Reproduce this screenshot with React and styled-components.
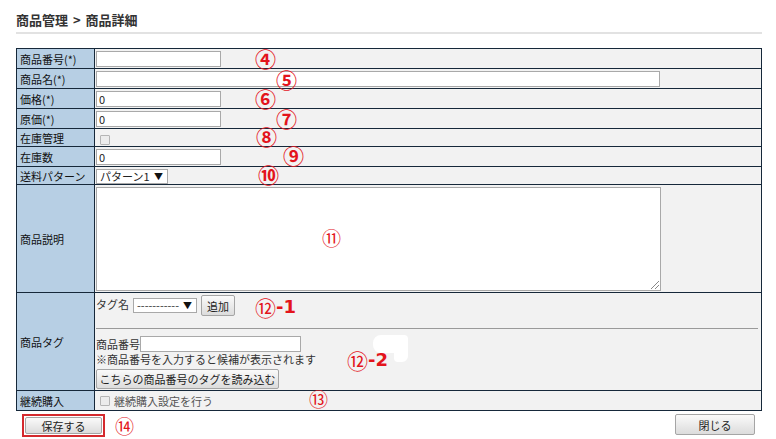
import React from 'react';
import styled, { createGlobalStyle } from 'styled-components';

const GlobalStyle = createGlobalStyle`
  body {
    margin: 0;
    background: #ffffff;
    font-family: "Noto Sans CJK JP", "Liberation Sans", sans-serif;
    font-size: 11px;
    color: #222;
  }
`;

const rows = [
  { label: '商品番号(*)', kind: 'input', width: 125, h: 19 },
  { label: '商品名(*)', kind: 'input', width: 564, h: 19 },
  { label: '価格(*)', kind: 'input', width: 125, value: '0', h: 19 },
  { label: '原価(*)', kind: 'input', width: 125, value: '0', h: 19 },
  { label: '在庫管理', kind: 'check', h: 17 },
  { label: '在庫数', kind: 'input', width: 125, value: '0', h: 19 },
  { label: '送料パターン', kind: 'select', h: 17 },
];

// red annotation marks laid over the form
const notes = [
  { text: '④', x: 255, y: 48 },
  { text: '⑤', x: 276, y: 69 },
  { text: '⑥', x: 255, y: 88 },
  { text: '⑦', x: 276, y: 108 },
  { text: '⑧', x: 256, y: 126 },
  { text: '⑨', x: 283, y: 145 },
  { text: '⑩', x: 258, y: 164 },
  { text: '⑪', x: 322, y: 228, thin: true },
  { text: '⑬', x: 309, y: 389, thin: true },
  { text: '⑭', x: 115, y: 416, thin: true },
];

export default function App() {
  return (
    <>
      <GlobalStyle />
      <Page>
        <Title>商品管理 &gt; 商品詳細</Title>
        <Rule />
        <Table>
          <tbody>
            {rows.map((r) => (
              <tr key={r.label}>
                <Label $h={r.h}>{r.label}</Label>
                <Value>
                  {r.kind === 'input' && <TextBox $w={r.width}>{r.value}</TextBox>}
                  {r.kind === 'check' && <Check />}
                  {r.kind === 'select' && (
                    <Select $w={72}>
                      パターン1<Arrow>▼</Arrow>
                    </Select>
                  )}
                </Value>
              </tr>
            ))}
            <tr>
              <Label $h={107}>商品説明</Label>
              <Value>
                <TextArea>
                  <Grip />
                </TextArea>
              </Value>
            </tr>
            <tr>
              <Label $h={96}>商品タグ</Label>
              <Value>
                <TagTop>
                  タグ名
                  <Select $w={64}>
                    -----------<Arrow>▼</Arrow>
                  </Select>
                  <Button $w={34} $h={21}>追加</Button>
                </TagTop>
                <TagBottom>
                  <Line>
                    商品番号<TextBox $w={161} />
                  </Line>
                  <Hint>※商品番号を入力すると候補が表示されます</Hint>
                  <Button $w={183}>こちらの商品番号のタグを読み込む</Button>
                </TagBottom>
              </Value>
            </tr>
            <tr>
              <Label $h={19}>継続購入</Label>
              <Value>
                <Line>
                  <Check />
                  <Muted>継続購入設定を行う</Muted>
                </Line>
              </Value>
            </tr>
          </tbody>
        </Table>
        <Footer>
          <SaveFrame>
            <Button $w={77} $h={17}>保存する</Button>
          </SaveFrame>
          <Button $w={80} $h={21}>閉じる</Button>
        </Footer>

        <Blob />
        {notes.map((n) => (
          <Note key={n.text} $thin={n.thin} style={{ left: n.x, top: n.y }}>
            {n.text}
          </Note>
        ))}
        <Note $thin $big style={{ left: 255, top: 297 }}>
          ⑫<Suffix>-1</Suffix>
        </Note>
        <Note $thin $big style={{ left: 347, top: 350 }}>
          ⑫<Suffix>-2</Suffix>
        </Note>
      </Page>
    </>
  );
}

const Page = styled.div`
  position: relative;
  width: 776px;
  height: 439px;
  padding: 11px 14px 0 16px;
  box-sizing: border-box;
  overflow: hidden;
`;

const Title = styled.div`
  font-size: 13px;
  font-weight: bold;
  line-height: 18px;
  color: #333;
  word-spacing: 2px;
`;

const Rule = styled.div`
  height: 2px;
  margin-top: 3px;
  background: #e2e2e2;
`;

const Table = styled.table`
  width: 746px;
  margin-top: 14px;
  border-collapse: collapse;
  border: 1px solid #16283a;
  background: #f2f2f2;
`;

const Label = styled.td`
  width: 74px;
  height: ${(p) => p.$h}px;
  padding: 0 0 0 3px;
  border: 1px solid #16283a;
  background: #b7cfe4;
  color: #111;
  line-height: 14px;
  white-space: nowrap;
  vertical-align: middle;
`;

const Value = styled.td`
  padding: 0 0 0 1px;
  border: 1px solid #16283a;
  vertical-align: middle;
  line-height: 14px;
`;

const TextBox = styled.span`
  display: inline-block;
  box-sizing: border-box;
  width: ${(p) => p.$w}px;
  height: 16px;
  padding: 0 2px;
  border: 1px solid #a9a9a9;
  background: #fff;
  line-height: 14px;
  vertical-align: middle;
`;

const Check = styled.span`
  display: inline-block;
  width: 8px;
  height: 8px;
  margin: 0 4px;
  border: 1px solid #b5b5b5;
  border-radius: 1px;
  background: #ececec;
  vertical-align: middle;
`;

const Select = styled.span`
  display: inline-flex;
  align-items: center;
  justify-content: space-between;
  box-sizing: border-box;
  width: ${(p) => p.$w}px;
  height: 15px;
  padding: 0 4px 0 3px;
  border: 1px solid #a9a9a9;
  background: #fff;
  line-height: 13px;
  white-space: nowrap;
  vertical-align: middle;
`;

const Arrow = styled.span`
  margin-left: 4px;
  font-size: 9px;
  color: #111;
`;

const TextArea = styled.div`
  position: relative;
  box-sizing: border-box;
  width: 565px;
  height: 104px;
  margin: 1px 0;
  border: 1px solid #a9a9a9;
  background: #fff;
`;

const Grip = styled.div`
  position: absolute;
  right: 1px;
  bottom: 1px;
  width: 8px;
  height: 8px;
  background: linear-gradient(
    135deg,
    transparent 45%,
    #888 45%,
    #888 52%,
    transparent 52%,
    transparent 70%,
    #888 70%,
    #888 77%,
    transparent 77%
  );
`;

const TagTop = styled.div`
  display: flex;
  align-items: flex-start;
  gap: 4px;
  box-sizing: border-box;
  height: 36px;
  padding-top: 2px;
  margin-right: 3px;
  border-bottom: 1px solid #9a9a9a;
  line-height: 18px;
  color: #333;

  & > span:nth-child(1) {
    margin-top: 3px;
  }
`;

const TagBottom = styled.div`
  display: flex;
  flex-direction: column;
  align-items: flex-start;
  padding: 6px 0 1px;
  color: #333;
`;

const Line = styled.div`
  display: flex;
  align-items: center;
  height: 17px;
  white-space: nowrap;
`;

const Hint = styled.div`
  height: 16px;
  line-height: 14px;
  margin-bottom: 1px;
  white-space: nowrap;
`;

const Muted = styled.span`
  color: #555;
`;

const Button = styled.span`
  display: inline-flex;
  align-items: center;
  justify-content: center;
  box-sizing: border-box;
  width: ${(p) => p.$w}px;
  height: ${(p) => p.$h || 20}px;
  border: 1px solid #a5a5a5;
  border-radius: 2px;
  background: linear-gradient(#fafafa, #dcdcdc);
  font-size: 11px;
  color: #222;
  white-space: nowrap;
`;

const Footer = styled.div`
  display: flex;
  justify-content: space-between;
  align-items: flex-start;
  padding: 3px 7px 0 6px;
`;

const SaveFrame = styled.div`
  display: flex;
  padding: 1px;
  border: 2px solid #d42a2e;
  background: #fff;
`;

const Note = styled.span`
  position: absolute;
  display: flex;
  align-items: center;
  font-family: "Noto Sans CJK JP", sans-serif;
  font-size: ${(p) => (p.$big ? 21 : p.$thin ? 19 : 21)}px;
  font-weight: ${(p) => (p.$thin ? 400 : 700)};
  line-height: 20px;
  color: #e3141c;
  white-space: nowrap;
`;

const Suffix = styled.span`
  font-family: "DejaVu Sans", sans-serif;
  font-size: 18px;
  font-weight: 700;
  margin-left: 0;
`;

const Blob = styled.div`
  position: absolute;
  left: 373px;
  top: 335px;
  width: 35px;
  height: 18px;
  border-radius: 8px 4px 6px 8px;
  background: #fff;

  &::after {
    content: "";
    position: absolute;
    right: 0;
    top: 12px;
    width: 14px;
    height: 15px;
    border-radius: 0 0 6px 4px;
    background: #fff;
  }
`;
